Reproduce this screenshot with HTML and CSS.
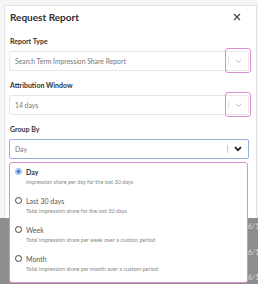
FILE: index.html
```html
<!DOCTYPE html>
<html>
<head>
  <meta charset="utf-8">
  <title>Request Report</title>
  <link rel="stylesheet" href="styles.css">
</head>
<body>
  <div class="top">
    <div class="modal">
      <div class="modal-head">
        <h1>Request Report</h1>
        <svg class="close" width="8" height="8" viewBox="0 0 8 8"><path d="M1 1L7 7M7 1L1 7" stroke="#444" stroke-width="1.2" fill="none"/></svg>
      </div>

      <div class="field">
        <label>Report Type</label>
        <div class="select">
          <span class="value">Search Term Impression Share Report</span>
          <span class="sep"></span>
          <svg class="chev" width="7" height="5" viewBox="0 0 7 5"><path d="M1 1L3.5 3.5L6 1" stroke="#bbb" stroke-width="1" fill="none"/></svg>
          <span class="mark"></span>
        </div>
      </div>

      <div class="field">
        <label>Attribution Window</label>
        <div class="select">
          <span class="value">14 days</span>
          <span class="sep"></span>
          <svg class="chev" width="7" height="5" viewBox="0 0 7 5"><path d="M1 1L3.5 3.5L6 1" stroke="#bbb" stroke-width="1" fill="none"/></svg>
          <span class="mark"></span>
        </div>
      </div>

      <div class="field">
        <label>Group By</label>
        <div class="select open">
          <span class="value">Day</span>
          <span class="sep"></span>
          <svg class="chev" width="8" height="6" viewBox="0 0 8 6"><path d="M1 1.2L4 4.2L7 1.2" stroke="#222" stroke-width="1.8" fill="none"/></svg>
        </div>
      </div>
    </div>
  </div>

  <div class="table">
    <div class="row">6/1</div>
    <div class="row">6/1</div>
    <div class="row">6/1</div>
  </div>

  <div class="menu">
    <div class="option">
      <span class="radio checked"></span>
      <div>
        <div class="opt-title">Day</div>
        <div class="opt-desc">Impression share per day for the last 30 days</div>
      </div>
    </div>
    <div class="option">
      <span class="radio"></span>
      <div>
        <div class="opt-title">Last 30 days</div>
        <div class="opt-desc">Total impression share for the last 30 days</div>
      </div>
    </div>
    <div class="option">
      <span class="radio"></span>
      <div>
        <div class="opt-title">Week</div>
        <div class="opt-desc">Total impression share per week over a custom period</div>
      </div>
    </div>
    <div class="option">
      <span class="radio"></span>
      <div>
        <div class="opt-title">Month</div>
        <div class="opt-desc">Total impression share per month over a custom period</div>
      </div>
    </div>
  </div>
</body>
</html>
```

FILE: styles.css
```css
body {
  margin: 0;
  font-family: Lato, "Open Sans", sans-serif;
  color: #333;
  overflow: hidden;
  height: 284px;
  position: relative;
}

.top {
  height: 218px;
  box-sizing: border-box;
  padding: 5px 1px 0 4px;
  background-color: #f5f5f5;
}

.modal {
  height: 213px;
  box-sizing: border-box;
  background-color: #fff;
  border: 1px solid #e3e3e3;
  border-bottom: none;
  padding: 0 7px 0 4px;
}

.modal-head {
  display: flex;
  justify-content: space-between;
  align-items: center;
  height: 21px;
  padding: 0 8px 0 1px;
}

.modal-head h1 {
  margin: 0;
  font-size: 10px;
  font-weight: 700;
  color: #2e2e2e;
}

.field {
  margin-top: 10px;
}

.field:first-of-type {
  margin-top: 9px;
}

.field label {
  display: block;
  font-size: 7px;
  font-weight: 700;
  color: #333;
  padding-left: 1px;
  margin-bottom: 6px;
}

.select {
  position: relative;
  display: flex;
  align-items: center;
  height: 18px;
  border: 1px solid #e6e6e6;
  border-radius: 2px;
  padding: 0 6px 0 5px;
}

.select.open {
  border-color: #8fb2dc;
}

.select .value {
  flex: 1;
  font-size: 6.8px;
  color: #777;
}

.select .sep {
  width: 1px;
  height: 8px;
  background-color: #ddd;
  margin-right: 6px;
}

.select.open .sep {
  background-color: #c8c8c8;
}

.mark {
  position: absolute;
  right: -3px;
  top: -4px;
  width: 24px;
  height: 23px;
  border: 1.5px solid #d98ed2;
  border-radius: 3px;
}

.table {
  height: 66px;
  display: grid;
  grid-template-rows: 26px 26px 14px;
  background-color: #8d8d8d;
}

.row {
  line-height: 16px;
  font-size: 7px;
  color: #dcdcdc;
  padding-left: 248px;
}

.row:last-child {
  line-height: 14px;
}

.menu {
  position: absolute;
  left: 9px;
  top: 162px;
  width: 239px;
  height: 121px;
  box-sizing: border-box;
  background-color: #fff;
  border: 1.5px solid #d98ed2;
  border-radius: 3px;
  padding: 4px 0 0 5px;
}

.option {
  display: flex;
  gap: 4px;
  height: 29px;
}

.radio {
  flex: none;
  width: 7px;
  height: 7px;
  border: 1px solid #444;
  border-radius: 50%;
  margin-top: 1px;
  box-sizing: border-box;
}

.radio.checked {
  border: 2px solid #a9c6ee;
  background-color: #2f77d9;
}

.opt-title {
  font-size: 7px;
  line-height: 10px;
  color: #555;
}

.option:first-child .opt-title {
  font-weight: 700;
  color: #333;
}

.opt-desc {
  font-size: 5.5px;
  line-height: 11px;
  color: #888;
}
```
